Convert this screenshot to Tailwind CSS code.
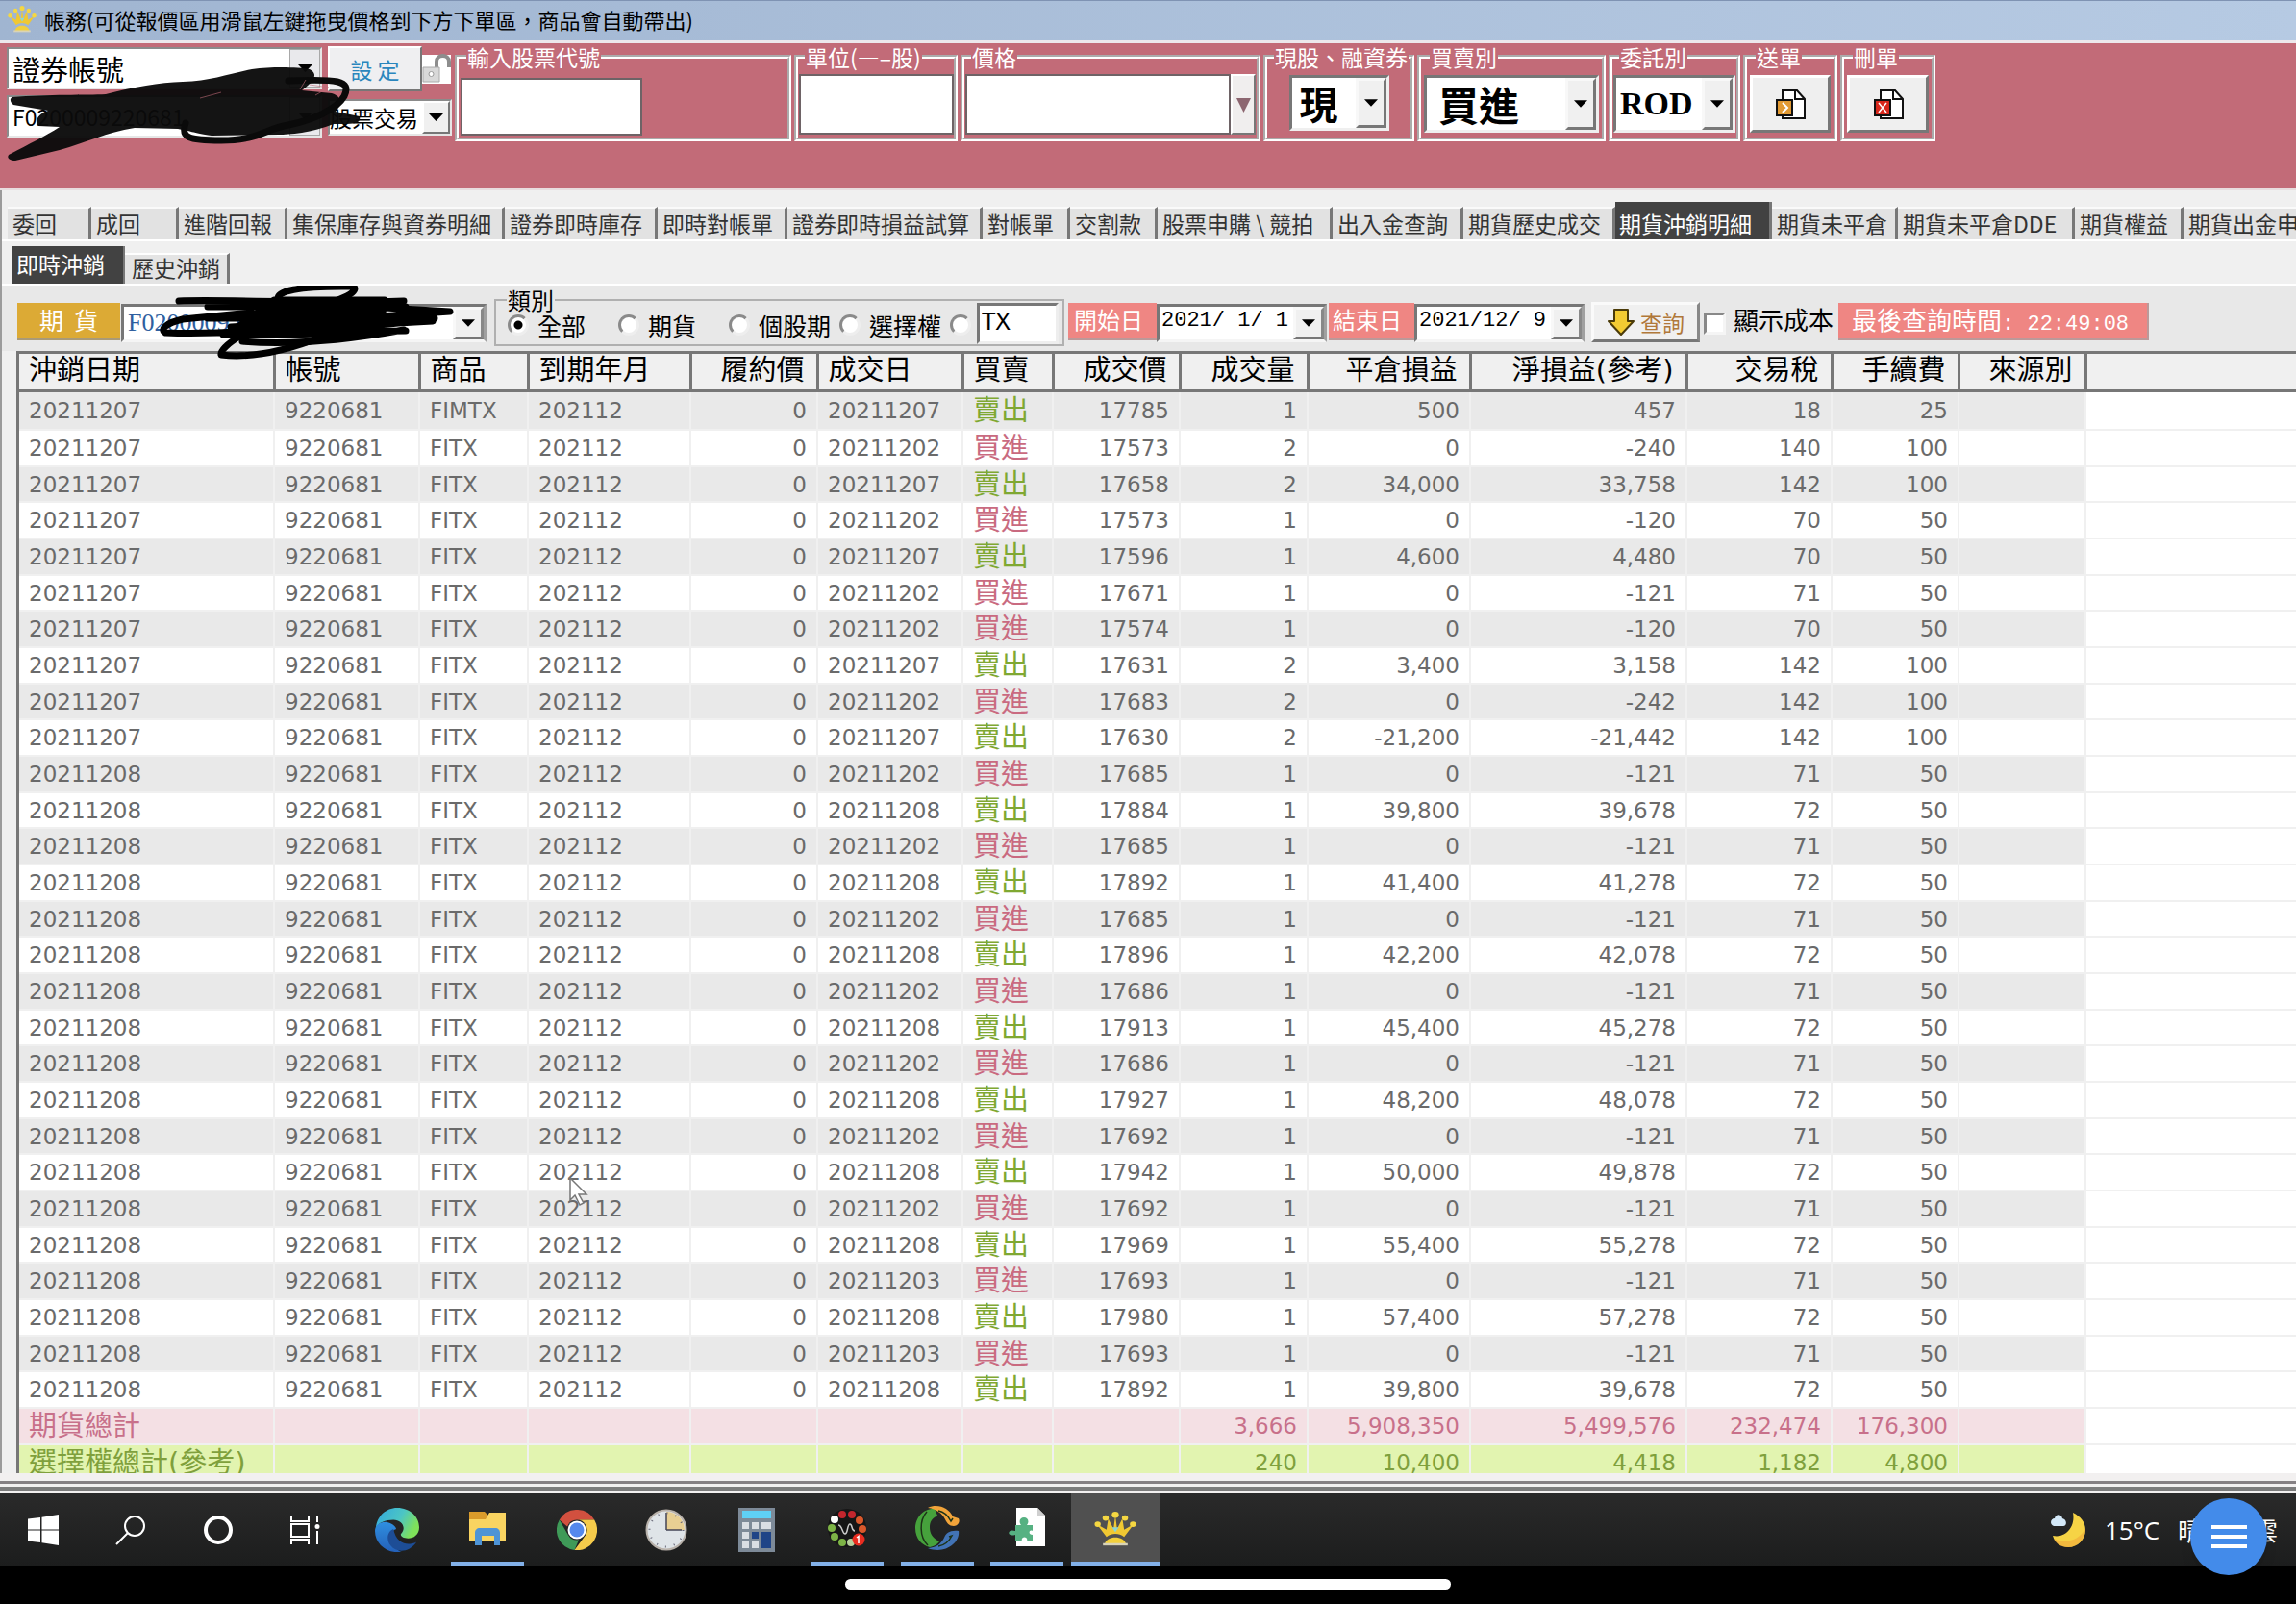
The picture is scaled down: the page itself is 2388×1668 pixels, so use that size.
<!DOCTYPE html>
<html lang="zh-Hant">
<head>
    <meta charset="UTF-8">
    <meta name="viewport" content="width=device-width, initial-scale=1.0">
    <title>帳務</title>
    <script src="https://cdn.jsdelivr.net/npm/@tailwindcss/browser@4"></script>
</head>
<body class="relative h-screen overflow-hidden flex flex-col bg-[#f0f0f0] text-black text-[23px] leading-6 font-['Noto_Sans_CJK_TC',sans-serif]">

<!-- Title bar -->
<header class="flex items-center gap-2 h-[45px] shrink-0 pl-2 pb-1 border-t border-t-[#7f93b3] border-b-3 border-b-[#ece8ec] bg-linear-to-r from-[#a0b5d1] to-[#b6cae3]">
    <svg class="w-[30px] h-7" viewBox="0 0 48 44" preserveAspectRatio="none"><use href="#crown"/></svg>
    <h1 class="text-[22px]">帳務(可從報價區用滑鼠左鍵拖曳價格到下方下單區，商品會自動帶出)</h1>
</header>

<!-- Order entry -->
<form class="relative flex items-start h-[153px] shrink-0 pl-[7px] pt-0.5 border-l-2 border-l-[#e6d8da] border-b-2 border-b-[#e8dcde] -ml-0.5 bg-[#c26b78]">
    <div class="flex flex-col gap-1.5 w-[328px] shrink-0 pt-0.5">
        <div class="flex h-[44px] bg-white border-2 border-t-[#8b8b8b] border-l-[#8b8b8b] border-r-[#e6e6e6] border-b-[#e6e6e6]">
            <select aria-label="帳號類別" class="appearance-none flex-1 min-w-0 pl-1 text-[29px] leading-9 bg-white"><option>證券帳號</option></select>
            <span class="w-8 flex items-center justify-center bg-[#e9e9ec] border border-[#a8a8a8]"><svg class="w-[15px] h-2" viewBox="0 0 15 8"><path d="M0 0h15L7.500 8z"/></svg></span>
        </div>
        <div class="flex h-[44px] bg-white border-2 border-t-[#8b8b8b] border-l-[#8b8b8b] border-r-[#e6e6e6] border-b-[#e6e6e6]">
            <select aria-label="證券帳號" class="appearance-none flex-1 min-w-0 pl-1 leading-9 bg-white text-[23px]"><option>F0200009220681</option></select>
            <span class="w-8 flex items-center justify-center bg-[#e9e9ec] border border-[#a8a8a8]"><svg class="w-[15px] h-2" viewBox="0 0 15 8"><path d="M0 0h15L7.500 8z"/></svg></span>
        </div>
    </div>
    <div class="ml-1.5 w-[129px] shrink-0 flex flex-col gap-2 pt-px">
        <div class="flex items-center">
            <button type="button" class="w-[98px] h-[47px] bg-[#efeff1] text-[#2a86bd] border-2 border-t-white border-l-white border-r-[#777] border-b-[#777]">設 定</button>
            <svg class="w-[30px] h-8" viewBox="0 0 30 32"><path fill="#fff" d="M0 1h30v30H0z"/><path d="M15 14V8c0-8 13-8 13 0v6" fill="none" stroke="#8d8d8d" stroke-width="4"/><path fill="#d9d9d9" stroke="#aaa" d="M1 14h17v15H1z"/><circle cx="9.500" cy="21" r="2.500" fill="#fff" stroke="#999"/></svg>
        </div>
        <div class="flex h-[38px] bg-white border-2 border-t-[#8b8b8b] border-l-[#8b8b8b] border-r-[#e6e6e6] border-b-[#e6e6e6]">
            <select aria-label="交易類別" class="appearance-none flex-1 min-w-0 leading-8 bg-white"><option>股票交易</option></select>
            <span class="w-[29px] flex items-center justify-center bg-[#f0f0f0] border-2 border-t-white border-l-white border-r-[#777] border-b-[#777]"><svg class="w-[15px] h-2" viewBox="0 0 15 8"><path d="M0 0h15L7.500 8z"/></svg></span>
        </div>
    </div>
    <div class="ml-[3px] flex items-start gap-[3px]">
        <fieldset class="w-[350px] h-[100px] pl-0.5 border-4 border-white [border-style:groove]">
            <legend class="ml-1.5 px-px text-white"><label for="stockCode">輸入股票代號</label></legend>
            <input id="stockCode" type="text" class="mt-2.5 w-[189px] h-[60px] px-2 text-3xl bg-white border-2 border-[#6e6366]">
        </fieldset>
        <fieldset class="w-[170px] h-[100px] pl-px border-4 border-white [border-style:groove]">
            <legend class="ml-1.5 px-px text-white"><label for="units">單位(—–股)</label></legend>
            <input id="units" type="text" class="mt-1.5 w-[161px] h-[63px] px-2 text-3xl bg-white border-2 border-[#6e6366]">
        </fieldset>
        <fieldset class="w-[312px] h-[100px] pl-px border-4 border-white [border-style:groove]">
            <legend class="ml-1.5 px-px text-white"><label for="price">價格</label></legend>
            <div class="mt-1.5 flex h-[63px]">
                <input id="price" type="text" class="w-[276px] px-2 text-3xl bg-white border-2 border-[#6e6366]">
                <button type="button" aria-label="選擇價格" class="w-[26px] flex items-center justify-center bg-[#f0eeee] border-2 border-t-white border-l-white border-r-[#777] border-b-[#777]"><svg class="w-[15px] h-4" viewBox="0 0 15 16"><path fill="#8c6670" d="M0 1h15L7.500 16z"/></svg></button>
            </div>
        </fieldset>
        <fieldset class="w-[157px] h-[100px] border-4 border-white [border-style:groove]">
            <legend class="ml-[7px] px-px text-white">現股、融資券</legend>
            <div class="mt-[7px] mx-auto w-[104px] h-[58px] flex bg-white border-3 border-t-[#777] border-l-[#777] border-r-[#efefef] border-b-[#efefef]">
                <select aria-label="現股、融資券" class="appearance-none flex-1 min-w-0 pl-2 text-[40px] leading-[48px] font-bold bg-white"><option>現</option></select>
                <span class="w-8 flex items-center justify-center bg-[#f0f0f0] border-3 border-t-[#f8f8f8] border-l-[#f8f8f8] border-r-[#777] border-b-[#777]"><svg class="w-[14px] h-2" viewBox="0 0 15 8"><path d="M0 0h15L7.500 8z"/></svg></span>
            </div>
        </fieldset>
        <fieldset class="w-[196px] h-[100px] px-[3px] border-4 border-white [border-style:groove]">
            <legend class="ml-1.5 px-px text-white">買賣別</legend>
            <div class="mt-[7px] h-[60px] flex bg-white border-3 border-t-[#777] border-l-[#777] border-r-[#efefef] border-b-[#efefef]">
                <select aria-label="買賣別" class="appearance-none flex-1 min-w-0 pl-3 text-[42px] leading-[48px] font-bold bg-white"><option>買進</option></select>
                <span class="w-8 flex items-center justify-center bg-[#f0f0f0] border-3 border-t-[#f8f8f8] border-l-[#f8f8f8] border-r-[#777] border-b-[#777]"><svg class="w-[14px] h-2" viewBox="0 0 15 8"><path d="M0 0h15L7.500 8z"/></svg></span>
            </div>
        </fieldset>
        <fieldset class="w-[137px] h-[100px] px-px border-4 border-white [border-style:groove]">
            <legend class="ml-1.5 px-px text-white">委託別</legend>
            <div class="mt-[7px] h-[60px] flex bg-white border-3 border-t-[#777] border-l-[#777] border-r-[#efefef] border-b-[#efefef]">
                <select aria-label="委託別" class="appearance-none flex-1 min-w-0 pl-1 text-[34px] leading-[48px] font-bold font-['Liberation_Serif',serif] bg-white"><option>ROD</option></select>
                <span class="w-8 flex items-center justify-center bg-[#f0f0f0] border-3 border-t-[#f8f8f8] border-l-[#f8f8f8] border-r-[#777] border-b-[#777]"><svg class="w-[14px] h-2" viewBox="0 0 15 8"><path d="M0 0h15L7.500 8z"/></svg></span>
            </div>
        </fieldset>
        <fieldset class="w-[98px] h-[100px] px-[3px] border-4 border-white [border-style:groove]">
            <legend class="ml-1.5 px-px text-white">送單</legend>
            <button type="button" aria-label="送單" class="mt-[7px] w-full h-[60px] flex items-center justify-center bg-[#efefef] border-3 border-t-white border-l-white border-r-[#777] border-b-[#777]">
                <svg class="w-8 h-8" viewBox="0 0 32 32" fill="none" stroke="#111" stroke-width="2"><path fill="#fff" d="M8 2h15l8 9v20H8z"/><path d="M21 2v9h10"/><path fill="#e29a33" d="M2 12h16v16H2z"/><path stroke="#fff" d="M8 15l5 5-5 5"/></svg>
            </button>
        </fieldset>
        <fieldset class="w-[99px] h-[100px] px-[3px] border-4 border-white [border-style:groove]">
            <legend class="ml-1.5 px-px text-white">刪單</legend>
            <button type="button" aria-label="刪單" class="mt-[7px] w-full h-[60px] flex items-center justify-center bg-[#efefef] border-3 border-t-white border-l-white border-r-[#777] border-b-[#777]">
                <svg class="w-8 h-8" viewBox="0 0 32 32" fill="none" stroke="#111" stroke-width="2"><path fill="#fff" d="M8 2h15l8 9v20H8z"/><path d="M21 2v9h10"/><path fill="#d8281c" d="M2 12h16v16H2z"/><path stroke="#fff" stroke-width="1.500" d="M6 15l8 10M14 15L6 25"/></svg>
            </button>
        </fieldset>
    </div>
    <!-- Redaction over the account number -->
    <svg class="absolute left-0 top-0 w-[400px] h-[125px] pointer-events-none" viewBox="0 45 400 125">
        <path fill="#0a0a0a" fill-opacity=".96" d="M13 101C50 98 90 99 110 98C140 90 165 86 190 85C220 84 240 76 262 72C285 69 310 70 322 72C334 78 322 88 314 94L345 97C358 101 354 110 349 116L374 121C376 130 366 129 347 129C325 138 300 140 290 140L220 141C200 138 198 136 185 134L140 133C110 138 90 148 62 156L16 167C8 167 6 162 11 160C30 150 48 141 62 132L40 131C35 126 40 118 50 115L14 109C10 106 10 102 13 101Z"/>
        <path fill="none" stroke="#0a0a0a" stroke-width="7" stroke-linecap="round" stroke-linejoin="round" d="M300 84C350 82 366 83 358 100C350 114 325 125 300 130C275 134 270 146 230 146C195 146 188 143 193 128"/>
        <path fill="none" stroke="#c26b78" stroke-opacity=".6" d="M208 102l22-6M318 83l-6 10M322 88l20 3-14 8"/>
    </svg>
</form>

<main class="flex-1 min-h-0 flex flex-col pt-3 border-l-2 border-l-[#9b9b9b]">
    <nav id="tabs" class="flex items-end h-[41px] shrink-0 pl-1.5 whitespace-nowrap overflow-hidden border-b-2 border-b-white"></nav>

    <div class="flex items-end h-[46px] shrink-0 pl-[11px] border-b-2 border-b-white">
        <button type="button" class="w-[117px] h-[39px] pb-1 pl-1 text-left bg-[#424242] text-white border-r-2 border-r-[#777]">即時沖銷</button>
        <button type="button" class="w-[109px] h-8 pb-1 pl-[7px] text-left bg-[#e4e4e4] text-[#333] border-t-2 border-t-white border-r-3 border-r-[#777]">歷史沖銷</button>
    </div>

    <!-- Filters -->
    <form class="relative flex items-end h-[68px] shrink-0 pl-4 pb-[9px] bg-[#e8e8e8] whitespace-nowrap">
        <button type="button" class="w-[107px] h-[39px] mb-0.5 pb-1 text-[25px] text-white bg-[#dcaa35] border-b-2 border-b-[#a99a78] whitespace-pre">期  貨</button>
        <div class="ml-px w-[380px] h-[40px] flex bg-white border-3 border-t-[#777] border-l-[#777] border-r-[#a0a0a0] border-b-[#f5f5f5]">
            <select aria-label="期貨帳號" class="appearance-none flex-1 min-w-0 pl-1 text-[26px] leading-8 text-[#2f5f9f] font-['Liberation_Serif',serif] bg-white"><option>F0200009220681</option></select>
            <span class="w-8 flex items-center justify-center bg-[#f0f0f0] border-3 border-t-[#f8f8f8] border-l-[#f8f8f8] border-r-[#888] border-b-[#777]"><svg class="w-[14px] h-2" viewBox="0 0 15 8"><path d="M0 0h15L7.500 8z"/></svg></span>
        </div>
        <fieldset class="ml-2 -mb-1 w-[593px] h-[60px] pl-3 border-2 border-[#b0b0b0]">
            <legend class="-ml-px px-px text-[24px]">類別</legend>
            <div class="-mt-3 flex items-end h-[46px] text-[25px]">
                <div class="w-[115px] h-9 pb-1 flex items-center gap-[9px]"><input type="radio" name="kind" id="kAll" checked class="appearance-none size-[22px] rounded-full bg-white border-3 border-t-[#8a8a8a] border-l-[#8a8a8a] border-r-[#eee] border-b-[#eee] checked:bg-[radial-gradient(#000_4px,#fff_5px)]"><label for="kAll">全部</label></div>
                <div class="w-[115px] h-9 pb-1 flex items-center gap-[9px]"><input type="radio" name="kind" id="kFut" class="appearance-none size-[22px] rounded-full bg-white border-3 border-t-[#8a8a8a] border-l-[#8a8a8a] border-r-[#eee] border-b-[#eee]"><label for="kFut">期貨</label></div>
                <div class="w-[115px] h-9 pb-1 flex items-center gap-[9px]"><input type="radio" name="kind" id="kStk" class="appearance-none size-[22px] rounded-full bg-white border-3 border-t-[#8a8a8a] border-l-[#8a8a8a] border-r-[#eee] border-b-[#eee]"><label for="kStk">個股期</label></div>
                <div class="w-[115px] h-9 pb-1 flex items-center gap-[9px]"><input type="radio" name="kind" id="kOpt" class="appearance-none size-[22px] rounded-full bg-white border-3 border-t-[#8a8a8a] border-l-[#8a8a8a] border-r-[#eee] border-b-[#eee]"><label for="kOpt">選擇權</label></div>
                <div class="h-9 pb-1 flex items-center"><input type="radio" name="kind" id="kCode" aria-label="商品代號" class="appearance-none size-[22px] rounded-full bg-white border-3 border-t-[#8a8a8a] border-l-[#8a8a8a] border-r-[#eee] border-b-[#eee]"></div>
                <input type="text" value="TX" aria-label="代號" class="ml-1.5 w-[85px] h-[43px] pl-0.5 pb-2 text-[26px] font-['Noto_Sans'] bg-white border-3 border-t-[#777] border-l-[#777] border-r-[#eee] border-b-[#eee]">
            </div>
        </fieldset>
        <label for="from" class="ml-1 mb-0.5 w-[92px] h-[39px] leading-[34px] pl-1.5 text-[24px] text-white bg-[#ef8683] border-b-2 border-b-[#b99]">開始日</label>
        <div class="w-[177px] h-[40px] flex bg-white border-3 border-t-[#777] border-l-[#777] border-r-[#a0a0a0] border-b-[#f5f5f5]">
            <input id="from" type="text" value="2021/ 1/ 1" class="flex-1 min-w-0 pl-0.5 pb-1 text-[22px] font-['Liberation_Mono',monospace]">
            <button type="button" aria-label="選擇開始日" class="w-8 flex items-center justify-center bg-[#f0f0f0] border-3 border-t-[#f8f8f8] border-l-[#f8f8f8] border-r-[#888] border-b-[#777]"><svg class="w-[14px] h-2" viewBox="0 0 15 8"><path d="M0 0h15L7.500 8z"/></svg></button>
        </div>
        <label for="to" class="ml-[2px] mb-0.5 w-[89px] h-[39px] leading-[34px] pl-1 text-[24px] text-white bg-[#ef8683] border-b-2 border-b-[#b99]">結束日</label>
        <div class="w-[177px] h-[40px] flex bg-white border-3 border-t-[#777] border-l-[#777] border-r-[#a0a0a0] border-b-[#f5f5f5]">
            <input id="to" type="text" value="2021/12/ 9" class="flex-1 min-w-0 pl-0.5 pb-1 text-[22px] font-['Liberation_Mono',monospace]">
            <button type="button" aria-label="選擇結束日" class="w-8 flex items-center justify-center bg-[#f0f0f0] border-3 border-t-[#f8f8f8] border-l-[#f8f8f8] border-r-[#888] border-b-[#777]"><svg class="w-[14px] h-2" viewBox="0 0 15 8"><path d="M0 0h15L7.500 8z"/></svg></button>
        </div>
        <button type="button" class="ml-[7px] w-[113px] h-[42px] flex items-center gap-1.5 pl-3.5 text-[#b0783a] bg-[#f0f0f0] border-3 border-t-[#fafafa] border-l-[#fafafa] border-r-[#888] border-b-[#777]">
            <svg class="w-7 h-7" viewBox="0 0 28 28"><path fill="#f3cb32" stroke="#4a3a08" stroke-width="2" stroke-linejoin="round" d="M7 1h14v12h6L14 27 1 13h6z"/></svg>查詢
        </button>
        <input id="cost" type="checkbox" class="ml-1 mb-2 appearance-none size-[23px] bg-white border-3 border-t-[#888] border-l-[#888] border-r-[#f5f5f5] border-b-[#f5f5f5]">
        <label for="cost" class="ml-2 mb-1.5 leading-9 text-[26px]">顯示成本</label>
        <output class="ml-[5px] mb-0.5 w-[323px] h-[39px] leading-[34px] pl-3.5 text-[26px] text-white bg-[#ef8683] border-r-2 border-b-2 border-[#b99]">最後查詢時間<span class="font-['Liberation_Mono',monospace] text-[22px]">: 22:49:08</span></output>
        <!-- Redaction over the account number -->
        <svg class="absolute left-40 top-0 w-[320px] h-20 pointer-events-none" viewBox="162 297 320 80" fill="none" stroke="#000" stroke-width="7" stroke-linecap="round" stroke-linejoin="round">
            <path d="M186 313C230 311 320 316 420 313M216 319H422M290 312C285 303 310 297 368 298C374 306 345 316 300 326C262 340 228 360 230 369C265 373 300 364 335 350C365 340 400 336 450 334"/>
            <path d="M262 325L190 332C172 336 166 343 172 346C220 348 290 344 350 332L468 324L400 320M216 331H452M232 348C300 350 370 344 422 344M252 355C310 360 370 352 420 343M240 340L450 328"/>
            <path fill="#000" d="M285 312H400L395 345L290 348L250 338Z"/>
        </svg>
    </form>

    <!-- Closed positions -->
    <section class="flex-1 min-h-0 overflow-hidden ml-[15px] bg-white border-t-3 border-t-[#777] border-l-3 border-l-[#777]">
        <table class="w-full table-fixed border-collapse leading-7 text-[#6a6a6a] text-[23px] font-['DejaVu_Sans','Noto_Sans_CJK_TC',sans-serif]">
            <colgroup>
                <col class="w-[265px]"><col class="w-[151px]"><col class="w-[113px]"><col class="w-[169px]"><col class="w-[132px]">
                <col class="w-[151px]"><col class="w-[94px]"><col class="w-[132px]"><col class="w-[133px]"><col class="w-[169px]">
                <col class="w-[225px]"><col class="w-[151px]"><col class="w-[132px]"><col class="w-[132px]"><col>
            </colgroup>
            <thead>
                <tr id="head" class="h-[38px] bg-[#f0f0f0] text-black text-[29px]"></tr>
            </thead>
            <tbody id="rows"></tbody>
        </table>
    </section>
</main>

<!-- Window frame -->
<div class="shrink-0 h-[21px] bg-[#f2f0f0] flex flex-col">
    <div class="mt-2 h-[3px] bg-[#858083]"></div>
    <div class="mt-[3px] h-1 bg-[#7c7c7c]"></div>
</div>

<!-- Taskbar -->
<footer class="flex items-stretch h-[75px] shrink-0 bg-linear-to-b from-[#2a2a2a] to-[#1c1d1d] text-white">
    <button type="button" aria-label="開始" class="w-[90px] flex items-center justify-center"><svg class="w-8 h-8" viewBox="0 0 32 32" fill="#fff"><path d="M0 4.500L13 3v12.500H0zM14.500 2.700L32 0v15.500H14.500zM0 16.500h13V29L0 27.500zM14.500 16.500H32V32l-17.500-2.700z"/></svg></button>
    <button type="button" aria-label="搜尋" class="w-[91px] flex items-center justify-center"><svg class="w-8 h-8" viewBox="0 0 32 32" fill="none" stroke="#fff" stroke-width="2"><circle cx="20" cy="12" r="10"/><path d="M13 19L1 31"/></svg></button>
    <button type="button" aria-label="Cortana" class="w-[91px] flex items-center justify-center"><svg class="w-8 h-8" viewBox="0 0 32 32" fill="none" stroke="#fff" stroke-width="4"><circle cx="16" cy="16" r="13"/></svg></button>
    <button type="button" aria-label="工作檢視" class="w-[90px] flex items-center justify-center"><svg class="w-8 h-8" viewBox="0 0 32 32" fill="none" stroke="#fff" stroke-width="2"><path d="M2 1v6h18V1M2 10h18v13H2zM2 31v-5h18v5M29 1v7M29 17v14"/><circle cx="29" cy="12.500" r="1.500" fill="#fff"/></svg></button>
    <button type="button" aria-label="Edge" class="ml-1 w-[94px] flex items-center justify-center">
        <svg class="w-[46px] h-[46px]" viewBox="0 0 48 48"><defs><linearGradient id="eg" x1="0" x2="1" y1="0" y2=".4"><stop offset="0" stop-color="#32a8e0"/><stop offset=".6" stop-color="#4cc5c4"/><stop offset="1" stop-color="#7fe25a"/></linearGradient><linearGradient id="eb" x1="0" x2="0" y1="0" y2="1"><stop offset="0" stop-color="#2f8fe0"/><stop offset="1" stop-color="#2460b8"/></linearGradient></defs>
            <path fill="url(#eg)" d="M1 22C2 9 12 0 24 0c14 0 24 10 24 21 0 8-6 12-12 12-5 0-8-2-8-4 0-1 3-3 3-7 0-5-5-9-11-9C11 13 4 16 1 22z"/><path fill="url(#eb)" d="M0 25c0-7 8-11 14-9 5 1 9 5 9 7-4 1-6 5-5 10 1 7 7 14 11 15C14 50 0 40 0 25z"/><path fill="#1d4d96" d="M20 23c-7 3-8 12-3 18 7 9 21 7 28-4-6 3-13 3-18-1-4-3-6-8-7-13z"/></svg>
    </button>
    <button type="button" aria-label="檔案總管" class="w-[93px] flex flex-col items-center justify-end">
        <svg class="w-10 h-9 mb-[17px]" viewBox="0 0 40 36"><path fill="#d99b2b" d="M1 1h16l4 4v8H1z"/><path fill="#f9d461" d="M1 9h17l4-7h17v30H1z"/><path fill="#4e94d6" d="M7 36V23c0-3 2-5 5-5h16c3 0 5 2 5 5v13h-6V26H14v10z"/></svg>
        <span class="w-[76px] h-1 bg-[#82b0e8]"></span>
    </button>
    <button type="button" aria-label="Chrome" class="w-[93px] flex items-center justify-center">
        <svg class="w-[42px] h-[42px]" viewBox="0 0 42 42"><path fill="#d2503f" d="M2.800 10.500a21 21 0 0 1 36.400 0H21a10.500 10.500 0 0 0-10 7z"/><path fill="#3f9a58" d="M2.800 10.500l9.100 15.800A10.500 10.500 0 0 0 23 31.300L18.500 42A21 21 0 0 1 2.800 10.500z"/><path fill="#f5cb4b" d="M39.200 10.500A21 21 0 0 1 18.500 42l11.600-15.700A10.500 10.500 0 0 0 21 10.500z"/><circle cx="21" cy="21" r="9.500" fill="#fff"/><circle cx="21" cy="21" r="7.500" fill="#5488ec"/></svg>
    </button>
    <button type="button" aria-label="時鐘" class="w-[94px] flex items-center justify-center">
        <svg class="w-11 h-11" viewBox="0 0 44 44"><circle cx="22" cy="22" r="20.500" fill="#dfe4e8" stroke="#b9b2ab" stroke-width="2"/><path fill="#e8cf93" d="M22 22V3a19 19 0 0 1 19 19z"/><path stroke="#445" stroke-width="1.500" d="M22 22h16M22 22V4"/><circle cx="22" cy="22" r="17.500" fill="none" stroke="#667" stroke-width="2" stroke-dasharray="1 8.160"/></svg>
    </button>
    <button type="button" aria-label="小算盤" class="w-[94px] flex items-center justify-center">
        <svg class="w-[38px] h-[46px]" viewBox="0 0 38 46"><path fill="#7d8a98" d="M0 0h38v46H0z"/><path fill="#5fd0f5" d="M4 3h30v8H4z"/><path fill="#d9dee4" d="M4 15h7v7H4zM14 15h7v7h-7zM4 25h7v7H4zM14 35h7v7h-7zM4 35h7v7H4zM24 15h10v7H24z"/><path fill="#1f4487" d="M14 25h7v7h-7zM24 25h10v17H24z"/></svg>
    </button>
    <button type="button" aria-label="看盤" class="w-[94px] flex flex-col items-center justify-end">
        <svg class="w-[42px] h-[42px] mb-3.5" viewBox="0 0 42 42"><circle cx="21" cy="21" r="20" fill="#161616"/><circle cx="16" cy="7" r="4" fill="#c3262d"/><circle cx="26" cy="7" r="4" fill="#c3262d"/><circle cx="34" cy="13" r="4" fill="#d9582b"/><circle cx="37" cy="22" r="4" fill="#d9582b"/><circle cx="8" cy="12" r="4" fill="#fff"/><circle cx="5" cy="21" r="4" fill="#7db446"/><circle cx="8" cy="30" r="4" fill="#7db446"/><circle cx="16" cy="36" r="4" fill="#7db446"/><circle cx="25" cy="36" r="4" fill="#b6cf9c"/><path fill="none" stroke="#ccc" stroke-width="1.500" d="M12 18c4 0 4 9 7 9s2-10 5-10 1 7 5 7"/><circle cx="33" cy="33" r="6.500" fill="#ea2d20"/><path stroke="#fff" stroke-width="1.500" fill="none" d="M31 31l2-1.500V37"/></svg>
        <span class="w-[76px] h-1 bg-[#82b0e8]"></span>
    </button>
    <button type="button" aria-label="下單" class="w-[93px] flex flex-col items-center justify-end">
        <svg class="w-[46px] h-[46px] mb-3" viewBox="0 0 46 46"><path fill="#46a23c" d="M20 3C9 2 0 12 0 23s7 18 15 20c5-1 8-3 10-6-8-4-10-9-10-15 0-5 2-9 8-12z"/><path fill="#f2a43a" d="M13 2c10-5 22 0 26 9l6 2c2 4-1 8-5 8-5 0-7-3-9-7-3-6-9-11-18-12z"/><path fill="#4273b5" d="M13 44c10-1 14-5 17-11 2-5 6-8 15-7 2 12-14 25-32 18z"/><path fill="none" stroke="#1d3318" stroke-width="1.500" d="M12 6C4 15 4 32 13 41M24 5c6 1 10 5 13 11l2-3M24 42c6-1 11-5 14-11l-3 1"/></svg>
        <span class="w-[76px] h-1 bg-[#82b0e8]"></span>
    </button>
    <button type="button" aria-label="元件" class="w-[93px] flex flex-col items-center justify-end">
        <svg class="w-[38px] h-10 mb-4" viewBox="0 0 38 40"><path fill="#fff" d="M8 0h22l8 8v32H8z"/><path fill="#cfcfcf" d="M30 0v8h8z"/><path fill="#56b182" d="M7 18h6c-3-4-1-8 3-8s6 4 3 8h6v6c-4-2-5 4 0 4v7h-6c2-6-7-6-5 0H7v-7c-9 3-9-7 0-4z"/></svg>
        <span class="w-[76px] h-1 bg-[#82b0e8]"></span>
    </button>
    <button type="button" aria-label="帳務" class="w-[92px] flex flex-col items-center justify-end bg-[#505050] border-b-4 border-b-[#82b0e8]">
        <svg class="w-11 h-9 mb-4" viewBox="0 0 48 44" preserveAspectRatio="none"><g id="crown"><path fill="#f0c832" d="M14 32L3 16l11 7 2-14 6 13 2-17 2 17 6-13 2 14 11-7-11 16c-6-5-14-5-20 0z"/><circle cx="24" cy="4" r="4" fill="#f5d742"/><circle cx="13" cy="8" r="3.500" fill="#f5d742"/><circle cx="35" cy="8" r="3.500" fill="#f5d742"/><circle cx="4" cy="16" r="3.500" fill="#f5d742"/><circle cx="44" cy="16" r="3.500" fill="#f5d742"/><path fill="#f2d03c" d="M12 41c2-11 22-11 24 0z"/><path fill="#d8d3b8" d="M10 40h28v3H10z"/><path fill="#8fd6d0" d="M20 20h8l-4 6z"/></g></svg>
    </button>
    <div class="ml-auto w-[255px] flex items-center text-[25px] whitespace-nowrap">
        <svg class="w-9 h-9 shrink-0" viewBox="0 0 36 36"><path fill="#f6d345" d="M23 0c8 4 13 10 13 18 0 10-8 18-18 18C10 36 4 31 2 24c13 3 24-9 21-24z"/><path fill="#f0a83a" fill-opacity=".6" d="M36 16c0 12-8 20-18 20C10 36 5 32 3 27c12 6 27 2 33-11z"/><path fill="#d3e8f8" d="M3 14c-5-2-3-8 1-8 1-5 7-5 8 0 5 1 5 8 1 8z"/></svg>
        <span class="ml-5 w-[76px] text-[26px] font-['Open_Sans','Noto_Sans']">15°C</span>
        <span class="text-[26px]">晴時多雲</span>
    </div>
</footer>
<div class="h-10 shrink-0 flex justify-center bg-black">
    <div class="mt-3.5 w-[630px] h-[11px] rounded-full bg-white"></div>
</div>

<button type="button" aria-label="選單" class="absolute right-[30px] bottom-[30px] size-20 rounded-full bg-[#438bea] shadow-lg flex flex-col items-center justify-center gap-1.5">
    <span class="w-[37px] h-1 bg-white"></span>
    <span class="w-[37px] h-1 bg-white"></span>
    <span class="w-[37px] h-1 bg-white"></span>
</button>

<svg class="absolute left-[592px] top-[1224px] w-5 h-[30px] pointer-events-none" viewBox="0 0 20 30"><path fill="#fff" stroke="#777" stroke-width="1.500" d="M1 1v23l5-5 5 10 4-2-5-9h8z"/></svg>

<script>
    const tabs = [
        ['委回', 'w-[87px]'], ['成回', 'w-[91px]'], ['進階回報', 'w-[113px]'], ['集保庫存與資券明細', 'w-[226px]'],
        ['證券即時庫存', 'w-[159px]'], ['即時對帳單', 'w-[135px]'], ['證券即時損益試算', 'w-[203px]'], ['對帳單', 'w-[91px]'],
        ['交割款', 'w-[91px]'], ['股票申購 \\ 競拍', 'w-[182px]'], ['出入金查詢', 'w-[136px]'], ['期貨歷史成交', 'w-[158px]'],
        ['期貨沖銷明細', 'w-[163px]'], ['期貨未平倉', 'w-[131px]'], ['期貨未平倉DDE', 'w-[184px]'], ['期貨權益', 'w-[113px]'],
        ['期貨出金申請', 'w-[160px]'],
    ];
    const active = '期貨沖銷明細';
    document.getElementById('tabs').innerHTML = tabs.map(([name, width]) => {
        const look = name === active
            ? 'h-[39px] pl-1 pt-1 bg-[#424242] text-white border-r-[#777]'
            : 'h-[34px] pl-[5px] pb-0.5 bg-[#e2e2e2] text-[#333] border-t-2 border-t-[#fafafa] border-r-[#777]';
        return `<button type="button" class="shrink-0 text-left border-r-3 ${look} ${width}">${name}</button>`;
    }).join('');

    const columns = ['沖銷日期', '帳號', '商品', '到期年月', '履約價', '成交日', '買賣', '成交價', '成交量', '平倉損益', '淨損益(參考)', '交易稅', '手續費', '來源別', ''];
    const rightAligned = [4, 7, 8, 9, 10, 11, 12, 13];
    document.getElementById('head').innerHTML = columns.map((name, i) =>
        `<th class="p-0 pl-2.5 pr-3 pb-0.5 font-normal whitespace-nowrap border-b-3 border-b-[#777] ${i < 14 ? 'border-r-3 border-r-[#777]' : ''} ${rightAligned.includes(i) ? 'text-right' : 'text-left'}">${name}</th>`
    ).join('');

    // close date, product, trade date, side, price, volume, profit, net, tax, fee
    const trades = `
1207 FIMTX 1207 S 17785 1 500 457 18 25
1207 FITX 1202 B 17573 2 0 -240 140 100
1207 FITX 1207 S 17658 2 34,000 33,758 142 100
1207 FITX 1202 B 17573 1 0 -120 70 50
1207 FITX 1207 S 17596 1 4,600 4,480 70 50
1207 FITX 1202 B 17671 1 0 -121 71 50
1207 FITX 1202 B 17574 1 0 -120 70 50
1207 FITX 1207 S 17631 2 3,400 3,158 142 100
1207 FITX 1202 B 17683 2 0 -242 142 100
1207 FITX 1207 S 17630 2 -21,200 -21,442 142 100
1208 FITX 1202 B 17685 1 0 -121 71 50
1208 FITX 1208 S 17884 1 39,800 39,678 72 50
1208 FITX 1202 B 17685 1 0 -121 71 50
1208 FITX 1208 S 17892 1 41,400 41,278 72 50
1208 FITX 1202 B 17685 1 0 -121 71 50
1208 FITX 1208 S 17896 1 42,200 42,078 72 50
1208 FITX 1202 B 17686 1 0 -121 71 50
1208 FITX 1208 S 17913 1 45,400 45,278 72 50
1208 FITX 1202 B 17686 1 0 -121 71 50
1208 FITX 1208 S 17927 1 48,200 48,078 72 50
1208 FITX 1202 B 17692 1 0 -121 71 50
1208 FITX 1208 S 17942 1 50,000 49,878 72 50
1208 FITX 1202 B 17692 1 0 -121 71 50
1208 FITX 1208 S 17969 1 55,400 55,278 72 50
1208 FITX 1203 B 17693 1 0 -121 71 50
1208 FITX 1208 S 17980 1 57,400 57,278 72 50
1208 FITX 1203 B 17693 1 0 -121 71 50
1208 FITX 1208 S 17892 1 39,800 39,678 72 50`.trim().split('\n').map(line => line.split(' '));

    const rows = trades.map(([closed, product, traded, side, ...numbers]) => ({
        cells: ['2021' + closed, '9220681', product, '202112', '0', '2021' + traded, side === 'S' ? '賣出' : '買進', ...numbers, ''],
        side,
    }));
    rows.push({ total: 'bg-[#f4e0e4] text-[#c8708a]', cells: ['期貨總計', '', '', '', '', '', '', '', '3,666', '5,908,350', '5,499,576', '232,474', '176,300', ''] });
    rows.push({ total: 'bg-[#e2f4b0] text-[#7fa03c]', cells: ['選擇權總計(參考)', '', '', '', '', '', '', '', '240', '10,400', '4,418', '1,182', '4,800', ''] });

    document.getElementById('rows').innerHTML = rows.map((row, r) => {
        // two rows of 38px and one of 37px; the first also fills the gap under the header
        const height = r === 0 ? 'h-[41px]' : r % 3 === 2 ? 'h-[37px]' : 'h-[38px]';
        const fill = row.total || (r % 2 ? 'bg-white' : 'bg-[#e9e9e9]');
        const cells = row.cells.map((text, i) => {
            let look = rightAligned.includes(i) ? 'text-right' : 'text-left';
            if (i === 6) look += row.side === 'S' ? ' text-[29px] text-[#7fa832]' : ' text-[29px] text-[#c96a80]';
            if (i === 0 && row.total) look += ' text-[29px]';
            return `<td class="p-0 px-2.5 whitespace-nowrap border-r-2 border-b-2 border-[#f0f0f0] ${fill} ${look}">${text}</td>`;
        }).join('');
        return `<tr class="${height}">${cells}<td class="p-0 border-b-2 border-[#f0f0f0]"></td></tr>`;
    }).join('');
</script>
</body>
</html>
